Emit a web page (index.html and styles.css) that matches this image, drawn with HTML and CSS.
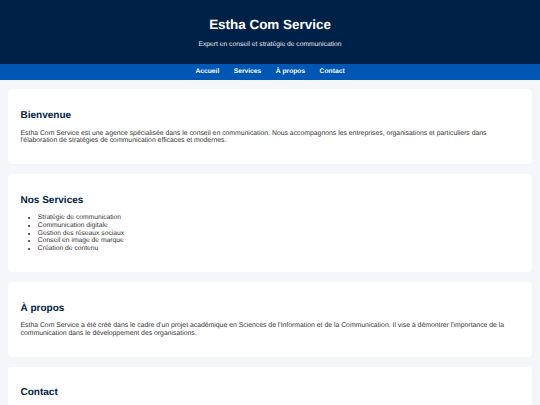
FILE: index.html
```html
<!DOCTYPE html>
<html lang="fr">
<head>
    <meta charset="UTF-8">
    <meta name="viewport" content="width=device-width, initial-scale=1.0">
    <title>Estha Com Service</title>
    <link rel="stylesheet" href="styles.css">
</head>
<body>
    <header class="site-header">
        <h1>Estha Com Service</h1>
        <p>Expert en conseil et stratégie de communication</p>
    </header>
    <nav class="main-nav">
        <a href="#accueil">Accueil</a>
        <a href="#services">Services</a>
        <a href="#apropos">À propos</a>
        <a href="#contact">Contact</a>
    </nav>

    <main class="content">
        <section id="accueil" class="card">
            <h2>Bienvenue</h2>
            <p>Estha Com Service est une agence spécialisée dans le conseil en communication. Nous accompagnons les entreprises, organisations et particuliers dans l'élaboration de stratégies de communication efficaces et modernes.</p>
        </section>

        <section id="services" class="card">
            <h2>Nos Services</h2>
            <ul>
                <li>Stratégie de communication</li>
                <li>Communication digitale</li>
                <li>Gestion des réseaux sociaux</li>
                <li>Conseil en image de marque</li>
                <li>Création de contenu</li>
            </ul>
        </section>

        <section id="apropos" class="card">
            <h2>À propos</h2>
            <p>Estha Com Service a été créé dans le cadre d'un projet académique en Sciences de l'Information et de la Communication. Il vise à démontrer l'importance de la communication dans le développement des organisations.</p>
        </section>

        <section id="contact" class="card">
            <h2>Contact</h2>
            <p>Email : contact@esthacomservice.com</p>
            <p>Téléphone : +000 00 00 00 00</p>
        </section>
    </main>
</body>
</html>
```

FILE: styles.css
```css
body {
    font-family: 'Liberation Sans', Arial, sans-serif;
    font-size: 6.72px;
    line-height: 7.7px;
    text-rendering: geometricPrecision;
    background-color: #f4f6f9;
    color: #333;
    margin: 0;
}
.site-header {
    background-color: #002147;
    color: #fff;
    text-align: center;
    padding: 17px 0 15.6px;
}
.site-header h1 {
    font-size: 13.44px;
    line-height: 15.5px;
    margin: 0 0 8.5px;
}
.site-header p {
    margin: 0;
    color: #e6e9ef;
}
.main-nav {
    background-color: #0056b3;
    display: flex;
    justify-content: center;
    gap: 14.4px;
    padding: 4.15px 0;
}
.main-nav a {
    color: #fff;
    font-weight: bold;
    text-decoration: none;
}
.content {
    padding: 8.7px 8px 0;
}
.card {
    background-color: #fff;
    border-radius: 4px;
    padding: 12.5px;
    margin-bottom: 9.6px;
}
.card h2 {
    font-size: 10px;
    line-height: 11.5px;
    color: #002147;
    margin: 8.3px 0;
}
.card p {
    font-size: 6.85px;
    margin: 6.72px 0;
}
.card ul {
    margin: 6.72px 0;
    padding-left: 17.3px;
}
```
